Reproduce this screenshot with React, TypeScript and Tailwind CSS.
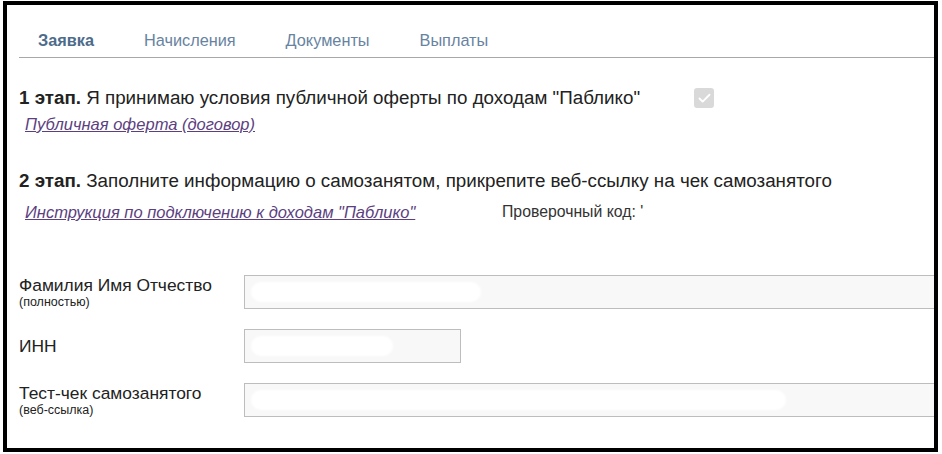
import { Check } from 'lucide-react';

const tabs = ['Заявка', 'Начисления', 'Документы', 'Выплаты'];

function Field({ label, hint, pill, narrow }: { label: string; hint?: string; pill: number; narrow?: boolean }) {
  return (
    <div className="flex items-center">
      <div className="w-[225px] shrink-0">
        <div className="text-[17.4px] leading-[20px] text-[#222]">{label}</div>
        {hint && <div className="text-[12.5px] leading-[14px] text-[#222]">{hint}</div>}
      </div>
      <div
        className={`h-[34px] bg-[#f8f8f8] border border-[#bdbdbd] flex items-center px-[6px] ${
          narrow ? 'w-[217px]' : 'flex-1 border-r-0'
        }`}
      >
        {/* redacted value */}
        <div className="h-[20px] rounded-[10px] bg-white blur-[1px]" style={{ width: pill }} />
      </div>
    </div>
  );
}

export default function App() {
  return (
    <div className="w-[942px] h-[454px] bg-white pt-[1px] pl-[3px] font-['Liberation_Sans',Arial,sans-serif]">
      <div className="w-[935px] h-[451px] border-4 border-black overflow-hidden">
        <div className="pl-[12px]">
          {/* Tabs */}
          <div className="h-[53px] flex items-end border-b border-[#a8a8a8] pb-[7px]">
            {tabs.map((t, i) => (
              <div
                key={t}
                className={`text-[16.3px] leading-[20px] ${
                  i === 0 ? 'ml-[19px] mr-[25px] font-bold text-[#4d6b8b]' : 'px-[25px] text-[#6783a1]'
                }`}
              >
                {t}
              </div>
            ))}
          </div>

          {/* Step 1 */}
          <div className="mt-[29px] flex items-center">
            <div className="text-[18.8px] leading-[22px] text-[#222]">
              <b>1 этап.</b> Я принимаю условия публичной оферты по доходам "Паблико"
            </div>
            <div className="ml-[54px] w-[20px] h-[20px] rounded-[3px] bg-[#d9d9d9] flex items-center justify-center">
              <Check size={15} strokeWidth={3} color="#ffffff" />
            </div>
          </div>
          <div className="mt-[6px] ml-[6px] text-[16.5px] leading-[18px] italic underline text-[#5c3f80]">
            Публичная оферта (договор)
          </div>

          {/* Step 2 */}
          <div className="mt-[37px] text-[18.8px] leading-[22px] text-[#222]">
            <b>2 этап.</b> Заполните информацию о самозанятом, прикрепите веб-ссылку на чек самозанятого
          </div>
          <div className="mt-[11px] flex items-center">
            <div className="w-[483px] pl-[6px] text-[16.5px] leading-[18px] italic underline text-[#5c3f80]">
              Инструкция по подключению к доходам "Паблико"
            </div>
            <div className="text-[15.8px] leading-[18px] text-[#333]">Проверочный код: '</div>
          </div>

          {/* Form */}
          <div className="mt-[54px] flex flex-col gap-[20px]">
            <Field label="Фамилия Имя Отчество" hint="(полностью)" pill={230} />
            <Field label="ИНН" pill={142} narrow />
            <Field label="Тест-чек самозанятого" hint="(веб-ссылка)" pill={535} />
          </div>
        </div>
      </div>
    </div>
  );
}
